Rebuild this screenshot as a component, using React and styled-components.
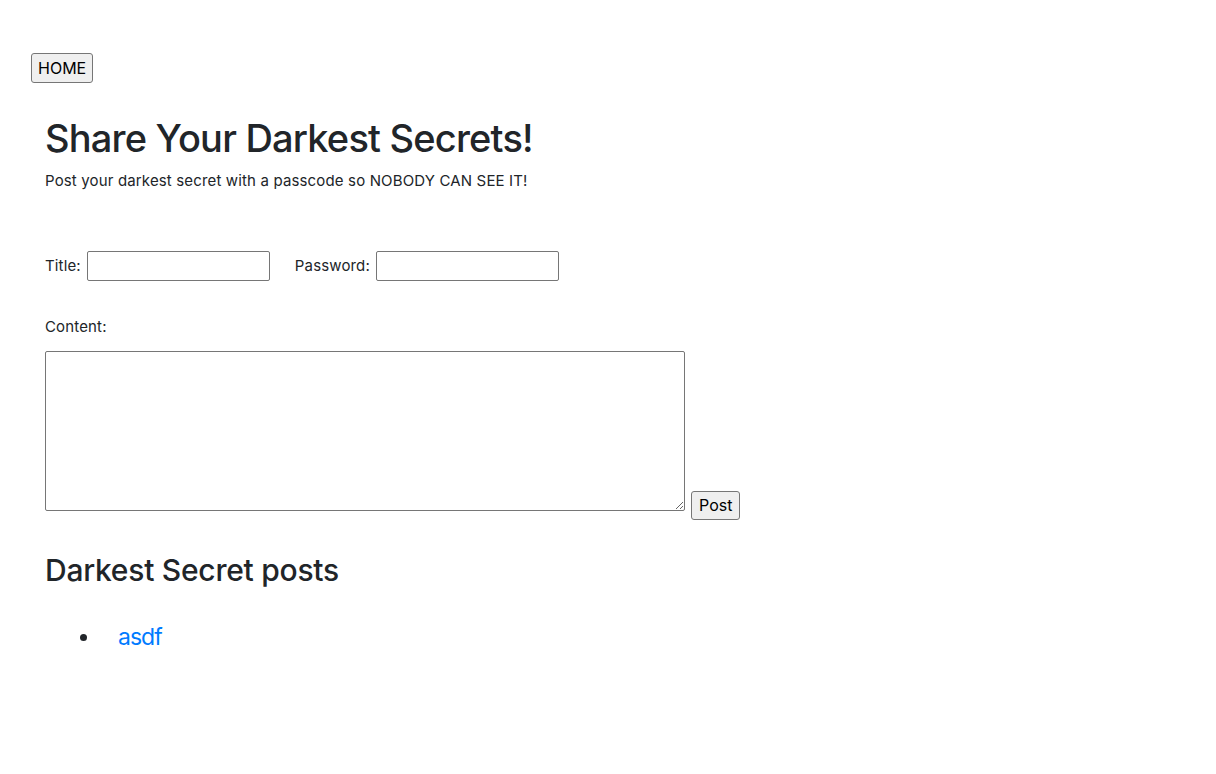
import React from 'react';
import styled, { createGlobalStyle } from 'styled-components';

const GlobalStyle = createGlobalStyle`
  html, body {
    margin: 0;
    background: #fff;
  }
  body {
    font-family: Inter, "Noto Sans", "Liberation Sans", sans-serif;
    font-size: 16px;
    line-height: 1.5;
    color: #212529;
  }
`;

const Page = styled.div`
  padding: 53px 0 40px 31px;
`;

const NavButton = styled.button`
  font-family: inherit;
  font-size: 16px;
  line-height: 20px;
  height: 30px;
  padding: 0 6px;
  color: #000;
  background: #efefef;
  border: 1px solid #767676;
  border-radius: 3px;
`;

const Main = styled.main`
  padding: 33px 14px 0;
`;

const Title = styled.h1`
  margin: 0 0 8px;
  font-size: 38px;
  font-weight: 500;
  line-height: 1.2;
  letter-spacing: -0.8px;
`;

const Lead = styled.p`
  margin: 0 0 59px;
  font-size: 15px;
  letter-spacing: 0.15px;
`;

const Row = styled.div`
  display: flex;
  align-items: center;
  gap: 25px;
  margin-bottom: 35px;
`;

const Field = styled.label`
  display: flex;
  align-items: center;
  gap: 6px;
  font-size: 15px;
  letter-spacing: 0.15px;
`;

const TextInput = styled.input`
  box-sizing: border-box;
  width: 183px;
  height: 30px;
  padding: 2px 4px;
  font-family: inherit;
  font-size: 15px;
  border: 1px solid #767676;
  border-radius: 2px;
`;

const ContentLabel = styled.div`
  font-size: 15px;
  letter-spacing: 0.15px;
  margin-bottom: 12px;
`;

const ComposeRow = styled.div`
  display: flex;
  align-items: flex-end;
  gap: 6px;
`;

const Area = styled.textarea`
  box-sizing: border-box;
  width: 640px;
  height: 160px;
  border: 1px solid #767676;
  border-radius: 2px;
  font-family: inherit;
  margin-bottom: 9px;
`;

const PostButton = styled(NavButton)`
  height: 29px;
  padding: 0 7px;
`;

const Subtitle = styled.h2`
  margin: 32px 0 36px;
  font-size: 30px;
  font-weight: 500;
  line-height: 1.2;
  letter-spacing: -0.25px;
`;

const PostList = styled.ul`
  margin: 0;
  padding-left: 56px;
  font-size: 23px;
  line-height: 1.2;
`;

const PostItem = styled.li`
  padding-left: 17px;

  &::marker {
    font-size: 22px;
  }
`;

const PostLink = styled.a`
  color: #007bff;
  text-decoration: none;
  letter-spacing: -1px;
`;

const posts = [{ id: 1, title: 'asdf' }];

export default function App() {
  return (
    <>
      <GlobalStyle />
      <Page>
        <NavButton>HOME</NavButton>
        <Main>
          <Title>Share Your Darkest Secrets!</Title>
          <Lead>Post your darkest secret with a passcode so NOBODY CAN SEE IT!</Lead>
          <Row>
            <Field>
              Title: <TextInput type="text" />
            </Field>
            <Field>
              Password: <TextInput type="password" />
            </Field>
          </Row>
          <ContentLabel>Content:</ContentLabel>
          <ComposeRow>
            <Area />
            <PostButton>Post</PostButton>
          </ComposeRow>
          <Subtitle>Darkest Secret posts</Subtitle>
          <PostList>
            {posts.map((p) => (
              <PostItem key={p.id}>
                <PostLink href="#">{p.title}</PostLink>
              </PostItem>
            ))}
          </PostList>
        </Main>
      </Page>
    </>
  );
}
